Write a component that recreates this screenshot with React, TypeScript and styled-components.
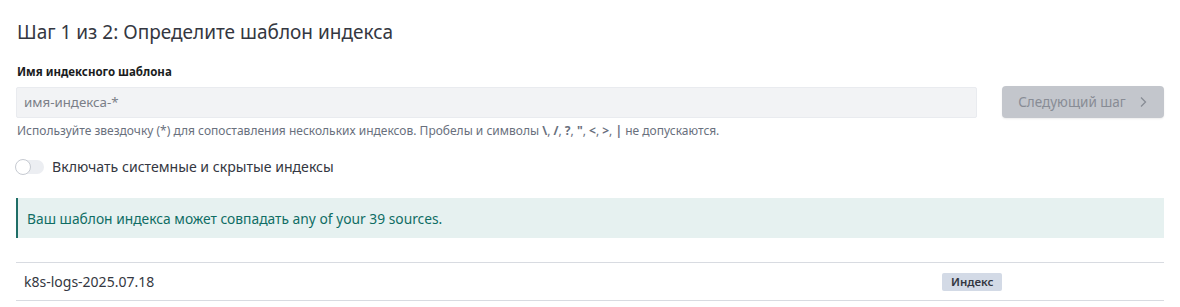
import React, { useState } from "react";
import styled, { createGlobalStyle } from "styled-components";

const Global = createGlobalStyle`
  html, body { margin: 0; padding: 0; background: #fff; }
  body { font-family: "Noto Sans", "Open Sans", sans-serif; color: #343741; }
  * { box-sizing: border-box; }
`;

const Page = styled.div`
  padding: 16px 16px 0 16px;
  width: 1180px;
`;

const Title = styled.h1`
  margin: 0;
  font-size: 19px;
  font-weight: 400;
  line-height: 32px;
  color: #343741;
  padding-left: 1px;
`;

const Label = styled.div`
  margin-top: 16px;
  font-size: 11.5px;
  font-weight: 700;
  line-height: 16px;
  color: #1a1c21;
  padding-left: 1px;
`;

const FieldRow = styled.div`
  display: flex;
  align-items: center;
  gap: 25px;
  margin-top: 6px;
`;

const Input = styled.input`
  flex: 1;
  height: 31px;
  border: 1px solid #e9ebef;
  background: #f2f3f5;
  border-radius: 2px;
  padding: 0 7px;
  font-family: inherit;
  font-size: 13.3px;
  color: #343741;
  outline: none;
  &::placeholder { color: #7b7f88; }
`;

const NextButton = styled.button`
  width: 162px;
  height: 32px;
  border: none;
  border-radius: 4px;
  background: #c3c6cc;
  color: #888c95;
  font-family: inherit;
  font-size: 13.5px;
  display: flex;
  align-items: center;
  justify-content: center;
  gap: 12px;
  padding: 0 12px;
  cursor: not-allowed;
  box-shadow: 0 1px 2px rgba(0,0,0,0.08);
`;

const Help = styled.div`
  margin-top: 5px;
  font-size: 12px;
  line-height: 16px;
  color: #69707d;
  padding-left: 1px;
  b { font-weight: 700; }
`;

const SwitchRow = styled.label`
  display: flex;
  align-items: center;
  gap: 8px;
  margin-top: 18px;
  font-size: 14.1px;
  color: #343741;
  cursor: pointer;
`;

const Track = styled.span<{ $on: boolean }>`
  position: relative;
  width: 28px;
  height: 14px;
  border-radius: 8px;
  background: ${(p) => (p.$on ? "#017d73" : "#eceef2")};
  display: inline-block;
`;

const Knob = styled.span<{ $on: boolean }>`
  position: absolute;
  top: -1px;
  left: ${(p) => (p.$on ? "13px" : "-1px")};
  width: 16px;
  height: 16px;
  border-radius: 50%;
  background: #fff;
  border: 1px solid #c6cad1;
`;

const Callout = styled.div`
  margin-top: 22px;
  background: #e6f1f0;
  border-left: 2px solid #1f6e67;
  height: 40px;
  display: flex;
  align-items: center;
  padding-left: 9px;
  font-size: 13.8px;
  color: #0f6d64;
`;

const Table = styled.div`
  margin-top: 24px;
  border-top: 1px solid #d8dbe1;
`;

const Row = styled.div`
  display: flex;
  align-items: center;
  height: 38px;
  border-bottom: 1px solid #d8dbe1;
  padding-left: 8px;
  font-size: 14px;
  color: #343741;
`;

const Name = styled.div`
  flex: 1;
`;

const BadgeCell = styled.div`
  width: 222px;
  display: flex;
`;

const Badge = styled.span`
  background: #d3dae6;
  color: #343741;
  font-size: 11.5px;
  font-weight: 600;
  padding: 0 9px 0 9px;
  line-height: 18px;
  border-radius: 2px;
`;

const Chevron = () => (
  <svg width="10" height="12" viewBox="0 0 10 12" fill="none">
    <path d="M3 1.5 L7.5 6 L3 10.5" stroke="#888c95" strokeWidth="1.3" />
  </svg>
);

export default function App() {
  const [on, setOn] = useState(false);
  return (
    <Page>
      <Global />
      <Title>Шаг 1 из 2: Определите шаблон индекса</Title>
      <Label>Имя индексного шаблона</Label>
      <FieldRow>
        <Input placeholder="имя-индекса-*" />
        <NextButton disabled>
          Следующий шаг <Chevron />
        </NextButton>
      </FieldRow>
      <Help>
        Используйте звездочку (*) для сопоставления нескольких индексов. Пробелы и символы <b>\</b>, <b>/</b>, <b>?</b>, <b>"</b>, <b>&lt;</b>, <b>&gt;</b>, <b>|</b> не допускаются.
      </Help>
      <SwitchRow onClick={() => setOn(!on)}>
        <Track $on={on}>
          <Knob $on={on} />
        </Track>
        Включать системные и скрытые индексы
      </SwitchRow>
      <Callout>Ваш шаблон индекса может совпадать any of your 39 sources.</Callout>
      <Table>
        <Row>
          <Name>k8s-logs-2025.07.18</Name>
          <BadgeCell>
            <Badge>Индекс</Badge>
          </BadgeCell>
        </Row>
      </Table>
    </Page>
  );
}
